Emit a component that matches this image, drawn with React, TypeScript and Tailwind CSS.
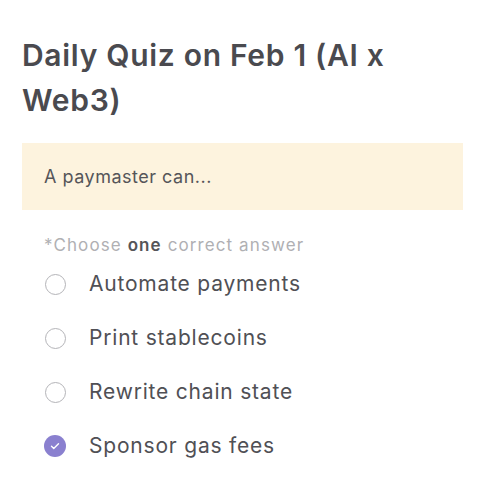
const options = [
  { label: "Automate payments", selected: false },
  { label: "Print stablecoins", selected: false },
  { label: "Rewrite chain state", selected: false },
  { label: "Sponsor gas fees", selected: true },
];

function Radio({ selected }: { selected: boolean }) {
  return (
    <span className="flex h-[22px] w-[22px] shrink-0 items-center justify-center">
      {selected ? (
        <span className="flex h-[22px] w-[22px] items-center justify-center rounded-full bg-[#8a80cf]">
          <svg width="12" height="12" viewBox="0 0 24 24" fill="none" stroke="white" strokeWidth="2.8" strokeLinecap="round" strokeLinejoin="round">
            <path d="M5 12.5l4.5 4.5L19 7.5" />
          </svg>
        </span>
      ) : (
        <span className="h-[21px] w-[21px] rounded-full border-[1.5px] border-[#b4b4b8] bg-white" />
      )}
    </span>
  );
}

export default function App() {
  return (
    <div className="min-h-[498px] w-[479px] bg-white font-['Inter',sans-serif]">
      <div className="pl-[22px] pr-[16px] pt-[33px]">
        <h1 className="text-[30px] font-semibold leading-[45px] tracking-[0.7px] text-[#4a4a4f]">
          Daily Quiz on Feb 1 (AI x Web3)
        </h1>
        <div className="mt-[20px] flex h-[67px] items-center bg-[#fdf3de] px-[22px] text-[18px] tracking-[0.5px] text-[#555559]">
          A paymaster can...
        </div>
        <div className="px-[22px]">
          <p className="mt-[23px] text-[17px] leading-[24px] tracking-[1.1px] text-[#b0b0b3]">
            *Choose <span className="font-semibold text-[#555559]">one</span> correct answer
          </p>
          <ul className="flex flex-col">
            {options.map((o) => (
              <li key={o.label} className="flex h-[54px] items-center gap-[23px]">
                <Radio selected={o.selected} />
                <span className="text-[21px] tracking-[0.8px] text-[#505055]">{o.label}</span>
              </li>
            ))}
          </ul>
        </div>
      </div>
    </div>
  );
}
